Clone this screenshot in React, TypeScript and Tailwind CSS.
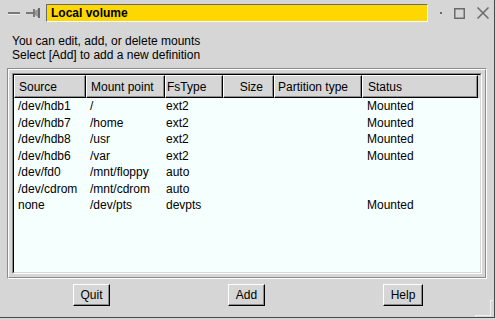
import type { ReactNode } from "react";

type Col = { title: string; width: string; pad: string; right?: boolean };

const cols: Col[] = [
  { title: "Source", width: "w-[72px]", pad: "pl-[4px]" },
  { title: "Mount point", width: "w-[79px]", pad: "pl-[4px]" },
  { title: "FsType", width: "w-[58px]", pad: "pl-[1px]" },
  { title: "Size", width: "w-[51px]", pad: "pr-[10px]", right: true },
  { title: "Partition type", width: "w-[88px]", pad: "pl-[3px]" },
  { title: "Status", width: "w-[116px]", pad: "pl-[5px]" },
];

const mounts = [
  ["/dev/hdb1", "/", "ext2", "", "", "Mounted"],
  ["/dev/hdb7", "/home", "ext2", "", "", "Mounted"],
  ["/dev/hdb8", "/usr", "ext2", "", "", "Mounted"],
  ["/dev/hdb6", "/var", "ext2", "", "", "Mounted"],
  ["/dev/fd0", "/mnt/floppy", "auto", "", "", ""],
  ["/dev/cdrom", "/mnt/cdrom", "auto", "", "", ""],
  ["none", "/dev/pts", "devpts", "", "", "Mounted"],
];

function Button({ width, children }: { width: string; children: ReactNode }) {
  return (
    <div className={`${width} flex h-[22px] items-center justify-center border-t border-l border-r border-b border-t-white border-l-white border-r-black border-b-black shadow-[inset_-1px_-1px_0_#8c8c8c] leading-none`}>
      {children}
    </div>
  );
}

export default function App() {
  return (
    <div className="h-[320px] w-[496px] bg-[#d6d6d6] font-['Liberation_Sans',Arial,sans-serif] text-[12px] text-black">
      <div className="relative flex h-[318px] w-[495px] flex-col border-r border-b border-[#4a4a4a]">
        {/* title bar */}
        <div className="flex items-start pt-[4px]">
          <div className="flex h-[18px] w-[46px] items-center pl-[8px]">
            <svg width="12" height="3" viewBox="0 0 12 3">
              <rect x="0" y="0" width="12" height="2" fill="#7a7a7a" />
              <rect x="0" y="2" width="12" height="1" fill="#efefef" />
            </svg>
            <svg className="ml-[6px]" width="15" height="10" viewBox="0 0 15 10">
              <rect x="0" y="4" width="7" height="2" fill="#7a7a7a" />
              <rect x="7" y="1" width="2" height="8" fill="#7a7a7a" />
              <path d="M9 3 L12 1 L12 9 L9 7 Z" fill="#9a9a9a" />
              <rect x="12" y="0" width="2" height="10" fill="#6a6a6a" />
            </svg>
          </div>
          <div className="h-[18px] w-[382px] border-t border-l border-r border-b border-t-[#6b6b6b] border-l-[#6b6b6b] border-r-white border-b-white bg-[#ffd700] pl-[4px] text-[12px] font-bold leading-[16px]">
            Local volume
          </div>
          <div className="flex h-[18px] flex-1 items-center">
            <div className="ml-[12px] h-[2px] w-[2px] bg-[#6a6a6a]" />
            <svg className="ml-[12px]" width="11" height="11" viewBox="0 0 11 11">
              <rect x="0.75" y="0.75" width="9.5" height="9.5" fill="none" stroke="#6a6a6a" strokeWidth="1.5" />
            </svg>
            <svg className="ml-[12px]" width="12" height="12" viewBox="0 0 12 12">
              <path d="M0.5 0.5 L11.5 11.5 M11.5 0.5 L0.5 11.5" stroke="#6a6a6a" strokeWidth="1.5" />
            </svg>
          </div>
        </div>

        {/* instructions */}
        <div className="mt-[12px] pl-[12px] leading-[14px]">
          <p>You can edit, add, or delete mounts</p>
          <p>Select [Add] to add a new definition</p>
        </div>

        {/* framed list */}
        <div className="mx-[7px] mt-[6px] h-[211px] border border-t-[#8c8c8c] border-l-[#8c8c8c] border-r-white border-b-white">
          <div className="h-full border border-t-white border-l-white border-r-[#8c8c8c] border-b-[#8c8c8c] p-[3px]">
            <div className="flex h-full flex-col border border-t-[#8c8c8c] border-l-[#8c8c8c] border-r-white border-b-white">
              <div className="flex h-full flex-col border-t border-l border-r border-b border-t-black border-l-black border-r-[#d6d6d6] border-b-[#d6d6d6] bg-[#f5fffe]">
                <div className="flex h-[23px] bg-[#d6d6d6]">
                  {cols.map((c) => (
                    <div
                      key={c.title}
                      className={`${c.width} ${c.pad} flex items-center ${c.right ? "justify-end" : ""} border-t border-l border-r border-b border-t-white border-l-white border-r-black border-b-black shadow-[inset_-1px_-1px_0_#8c8c8c]`}
                    >
                      {c.title}
                    </div>
                  ))}
                  <div className="flex-1" />
                </div>
                <div className="flex-1">
                  {mounts.map((row) => (
                    <div key={row[0]} className="flex h-[16.5px] items-center">
                      {row.map((cell, i) => (
                        <div key={i} className={`${cols[i].width} ${cols[i].pad} ${cols[i].right ? "text-right" : ""} whitespace-nowrap`}>
                          {cell}
                        </div>
                      ))}
                    </div>
                  ))}
                </div>
              </div>
            </div>
          </div>
        </div>

        {/* buttons */}
        <div className="mt-[5px] flex justify-between pl-[73px] pr-[71px]">
          <Button width="w-[37px]">Quit</Button>
          <Button width="w-[37px]">Add</Button>
          <Button width="w-[40px]">Help</Button>
        </div>

        {/* resize corner */}
        <div className="absolute right-[1px] bottom-0 h-[17px] w-[18px]">
          <div className="absolute right-0 top-0 h-[16px] w-[3px] border-l border-t border-[#f0f0f0]" />
          <div className="absolute bottom-0 left-0 h-[2px] w-[16px] border-l border-t border-[#f0f0f0]" />
        </div>
      </div>
    </div>
  );
}
